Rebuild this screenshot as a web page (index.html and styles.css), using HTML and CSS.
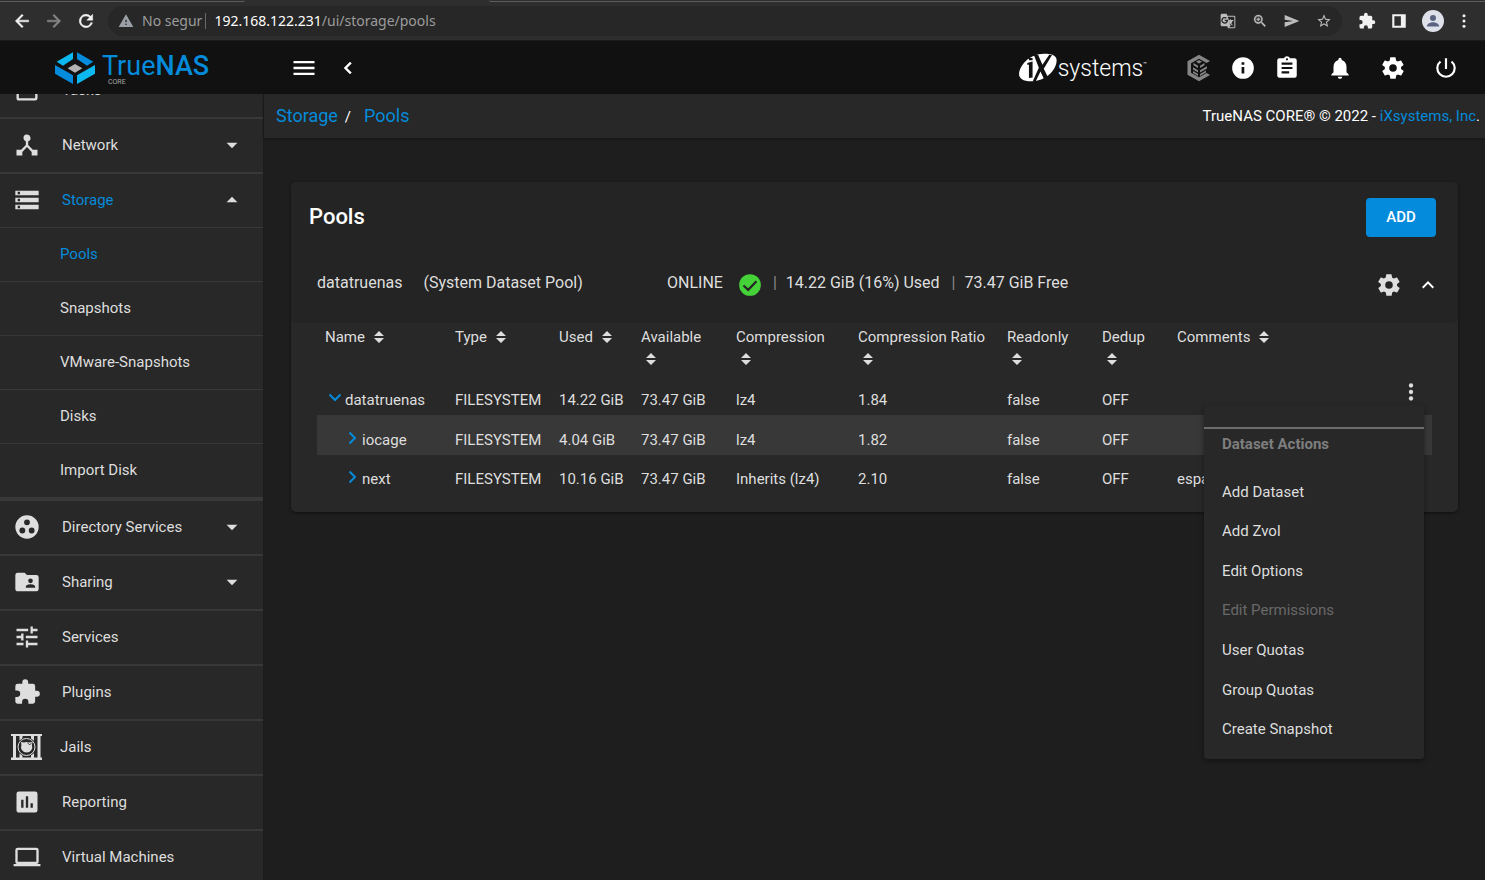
FILE: index.html
```html
<!DOCTYPE html>
<html lang="en">
<head>
<meta charset="utf-8">
<title>TrueNAS - Pools</title>
<link rel="stylesheet" href="styles.css">
</head>
<body>
<div class="browser">
  <div class="tabstrip"><span class="tabs-left"></span><span class="tabs-right"></span></div>
  <div class="toolbar">
    <button class="tool" aria-label="Back"><svg viewBox="0 0 24 24"><path d="M20 11H7.8l5.6-5.6L12 4l-8 8 8 8 1.400-1.400L7.800 13H20z" stroke="currentColor" stroke-width=".6"/></svg></button>
    <button class="tool dim" aria-label="Forward"><svg viewBox="0 0 24 24"><path d="M12 4l-1.400 1.400L16.200 11H4v2h12.200l-5.600 5.600L12 20l8-8z" stroke="currentColor" stroke-width=".6"/></svg></button>
    <button class="tool" aria-label="Reload"><svg viewBox="0 0 24 24"><path d="M17.650 6.350A8 8 0 1 0 19.730 14h-2.080A6 6 0 1 1 12 6c1.660 0 3.140.690 4.220 1.780L13 11h7V4z" stroke="currentColor" stroke-width=".6"/></svg></button>
    <div class="omnibox">
      <svg class="warn" viewBox="0 0 24 24"><path d="M1 21h22L12 2zm12-3h-2v-2h2zm0-4h-2v-4h2z"/></svg>
      <span class="insecure">No segur</span>
      <span class="url"><b>192.168.122.231</b>/ui/storage/pools</span>
      <button class="tool pale" aria-label="Translate"><svg viewBox="0 0 24 24"><path fill-rule="evenodd" d="M21 4H11l-1-3H3a2 2 0 0 0-2 2v15a2 2 0 0 0 2 2h8l1 3h9a2 2 0 0 0 2-2V6a2 2 0 0 0-2-2zM7 16a5 5 0 1 1 3.300-8.700L8.900 8.700A3 3 0 1 0 9.800 12H7v-2h5A5 5 0 0 1 7 16zm6.200-5.400h1.800V9.500h1.300v1.100H20v1.300h-1.200a9 9 0 0 1-1.900 3.700l2.300 2.300-1 1-2.300-2.400-1 1-.5-1.700.6-.6a9 9 0 0 1-1.300-2zM21.500 21a.5.5 0 0 1-.5.500h-7.500L16 19l-4.500-13.500H21a.5.5 0 0 1 .500.500z"/></svg></button>
      <button class="tool pale" aria-label="Zoom"><svg viewBox="0 0 24 24"><path d="M15.500 14h-.8l-.3-.3A6.500 6.500 0 1 0 13.700 14.400l.3.3v.8l5 5 1.500-1.500zm-6 0a4.500 4.500 0 1 1 0-9 4.500 4.500 0 0 1 0 9zm.700-7H8.800v1.800H7v1.400h1.800V12h1.400v-1.800H12V8.800h-1.800z" stroke="currentColor" stroke-width=".5"/></svg></button>
      <button class="tool pale" aria-label="Send"><svg viewBox="0 0 24 24"><path d="M1 21l22-9L1 3v7l13 2-13 2z"/></svg></button>
      <button class="tool pale" aria-label="Bookmark"><svg viewBox="0 0 24 24"><path d="M22 9.200l-7.200-.6L12 2 9.200 8.600 2 9.200l5.500 4.700L5.800 21 12 17.300 18.200 21l-1.600-7.100zM12 15.400l-3.800 2.300 1-4.300-3.300-2.900 4.400-.4 1.700-4 1.700 4 4.400.4-3.300 2.900 1 4.300z"/></svg></button>
    </div>
    <button class="tool ext" aria-label="Extensions"><svg viewBox="0 0 24 24"><path d="M20.500 11H19V7a2 2 0 0 0-2-2h-4V3.500a2.500 2.500 0 0 0-5 0V5H4a2 2 0 0 0-2 2v3.800h1.500a2.700 2.700 0 0 1 0 5.400H2V20c0 1.100.9 2 2 2h3.800v-1.500a2.700 2.700 0 0 1 5.400 0V22H17a2 2 0 0 0 2-2v-4h1.500a2.500 2.500 0 0 0 0-5z"/></svg></button>
    <button class="tool" aria-label="Side panel"><svg viewBox="0 0 24 24"><path fill-rule="evenodd" d="M3 3h18v18H3zm2.800 2.800v12.400h8.700V5.800z"/></svg></button>
    <button class="avatar" aria-label="Profile"><svg viewBox="0 0 24 24"><circle cx="12" cy="12" r="12" fill="#dee1ea"/><circle cx="12" cy="8.700" r="3.300" fill="#5a6380"/><path d="M5.300 18c0-3 3.700-4.700 6.700-4.700s6.700 1.700 6.700 4.700z" fill="#5a6380"/></svg></button>
    <button class="tool" aria-label="Browser menu"><svg viewBox="0 0 24 24"><circle cx="12" cy="5" r="2"/><circle cx="12" cy="12" r="2"/><circle cx="12" cy="19" r="2"/></svg></button>
  </div>
</div>

<header class="topbar">
  <a class="brand" href="#">
    <svg class="brand-mark" viewBox="165 152 120 96"><path fill="#0cb8f0" d="M170 181l49-28v20l-30 20zM285 191v26l-54 31v-26z"/><path fill="#048bdb" d="M280 181l-49-28v20l30 20zM165 191v26l54 31v-26z"/><path fill="#b4b4b4" d="M203 201l22-13 22 13-22 13z"/></svg>
    <span class="brand-text"><span class="brand-name">True<b>NAS</b></span><span class="brand-sub">CORE</span></span>
  </a>
  <button class="hbtn burger" aria-label="Toggle menu"><svg class="i28" viewBox="0 0 24 24"><path d="M3 6h18v2H3zm0 5h18v2H3zm0 5h18v2H3z"/></svg></button>
  <button class="hbtn" aria-label="Collapse menu"><svg class="i24" viewBox="0 0 24 24"><path d="M15.400 7.400L14 6l-6 6 6 6 1.400-1.400L10.800 12z" stroke="currentColor" stroke-width=".5"/></svg></button>
  <a class="ix" href="#" aria-label="iXsystems">
    <svg class="ix-mark" viewBox="58 156 118 88"><path fill="#fff" d="M58 220c0-26 32-62 76-62 24 0 38 6 38 20 0 30-34 64-78 64-24 0-36-8-36-22z"/><path fill="#111" d="M83 186l16-4v48l-11 2v-40h-5zM88 171h11v7H88zM103 162l13 0 13 30 20-30h9l-25 42 18 36h-15l-13-28-15 31h-9l19-42z"/></svg>
    <span class="ix-name">systems</span><span class="tm">™</span>
  </a>
  <div class="status-icons">
    <button class="hbtn grey" aria-label="TrueCommand"><svg class="i28" viewBox="0 0 28 28"><path d="M14 .8l11 6.300-3.400 2L14 4.800 6 9.300v9.400l8 4.600 7.600-4.200 3.400 1.800-11 6.300L2.500 20.700V7.300z"/><path d="M14 6l3 1.800-3 1.800-3-1.800zM8.500 9l4.500 2.700v2.200L8.500 11.300zM19.500 9L15 11.700v2.200l4.500-2.600zM8 13.200l5 3v2.200l-5-3zM22 12.200l-7 4v2.200l7-4zM8 17l5 3v2l-5-3zM21 16.600L15 20v2l6-3.400z"/></svg></button>
    <button class="hbtn" aria-label="Information"><svg class="i26" viewBox="0 0 24 24"><path fill-rule="evenodd" d="M12 2a10 10 0 1 0 0 20 10 10 0 0 0 0-20zm1.200 15h-2.500v-6h2.500zm0-8h-2.500V6.600h2.500z"/></svg></button>
    <button class="hbtn" aria-label="Task manager"><svg class="i26" viewBox="0 0 24 24"><path fill-rule="evenodd" d="M19 3h-4.200a3 3 0 0 0-5.600 0H5a2 2 0 0 0-2 2v14c0 1.100.9 2 2 2h14a2 2 0 0 0 2-2V5a2 2 0 0 0-2-2zm-7 0a1 1 0 1 1 0 2 1 1 0 0 1 0-2zm2 14H7v-2h7zm3-4H7v-2h10zm0-4H7V7h10z"/></svg></button>
    <button class="hbtn wide" aria-label="Notifications"><svg class="i26" viewBox="0 0 24 24"><path d="M12 22a2 2 0 0 0 2-2h-4c0 1.100.9 2 2 2zm6-6v-5c0-3.100-1.600-5.600-4.500-6.300V4a1.500 1.500 0 0 0-3 0v.7C7.600 5.400 6 7.900 6 11v5l-2 2v1h16v-1z"/></svg></button>
    <button class="hbtn wide" aria-label="Settings"><svg class="i26" viewBox="0 0 24 24"><path fill-rule="evenodd" d="M19.400 13a7.500 7.500 0 0 0 0-2l2.100-1.600a.5.5 0 0 0 .1-.7l-2-3.400a.5.5 0 0 0-.6-.2l-2.500 1a7.300 7.300 0 0 0-1.700-1l-.4-2.700a.5.5 0 0 0-.5-.4h-4a.5.5 0 0 0-.5.400L9 5.100a7.700 7.700 0 0 0-1.700 1l-2.500-1a.5.500 0 0 0-.6.200l-2 3.400a.5.5 0 0 0 .1.700L4.500 11a8 8 0 0 0 0 2l-2.100 1.600a.5.5 0 0 0-.1.700l2 3.400c.1.200.4.300.6.200l2.500-1a7.300 7.300 0 0 0 1.700 1l.4 2.700c0 .2.200.4.500.4h4c.200 0 .5-.2.500-.4l.4-2.700a7.700 7.700 0 0 0 1.700-1l2.500 1c.2.100.5 0 .6-.2l2-3.400a.5.5 0 0 0-.1-.7zM12 15.500a3.500 3.500 0 1 1 0-7 3.500 3.500 0 0 1 0 7z"/></svg></button>
    <button class="hbtn wide" aria-label="Power"><svg class="i26" viewBox="0 0 24 24"><path d="M13 3h-2v10h2zm4.800 2.200l-1.400 1.400A7 7 0 1 1 7.600 6.600L6.200 5.200a9 9 0 1 0 11.600 0z"/></svg></button>
  </div>
</header>

<div class="layout">
  <nav class="sidebar">
    <ul class="menu">
      <li><a class="item" href="#"><svg class="i28" viewBox="0 0 24 24"><path d="M19 3h-1V1h-2v2H8V1H6v2H5a2 2 0 0 0-2 2v14c0 1.100.9 2 2 2h14a2 2 0 0 0 2-2V5a2 2 0 0 0-2-2zm0 16H5V8h14z"/></svg><span>Tasks</span></a></li>
      <li><a class="item" href="#"><svg class="i28" viewBox="0 0 24 24"><path d="M17 16l-4-4V8.800A3 3 0 1 0 9 6c0 1.300.800 2.400 2 2.800V12l-4 4H3v5h5v-3l4-4.200 4 4.200v3h5v-5z"/></svg><span>Network</span><svg class="i26 caret" viewBox="0 0 24 24"><path d="M7 10l5 5 5-5z"/></svg></a></li>
      <li class="open"><a class="item active" href="#"><svg class="i28" viewBox="0 0 24 24"><path fill-rule="evenodd" d="M2 20h20v-4H2zm2-3h2v2H4zM2 4v4h20V4zm4 3H4V5h2zm-4 7h20v-4H2zm2-3h2v2H4z"/></svg><span>Storage</span><svg class="i26 caret" viewBox="0 0 24 24"><path d="M7 14l5-5 5 5z"/></svg></a>
        <ul class="submenu">
          <li><a class="active" href="#">Pools</a></li>
          <li><a href="#">Snapshots</a></li>
          <li><a href="#">VMware-Snapshots</a></li>
          <li><a href="#">Disks</a></li>
          <li><a href="#">Import Disk</a></li>
        </ul>
      </li>
      <li><a class="item" href="#"><svg class="i28" viewBox="0 0 24 24"><path fill-rule="evenodd" d="M12 2a10 10 0 1 0 0 20 10 10 0 0 0 0-20zM8 17.500a2.500 2.500 0 1 1 0-5 2.500 2.500 0 0 1 0 5zM9.500 8a2.500 2.500 0 1 1 5 0 2.500 2.500 0 0 1-5 0zm6.500 9.500a2.500 2.500 0 1 1 0-5 2.500 2.500 0 0 1 0 5z"/></svg><span>Directory Services</span><svg class="i26 caret" viewBox="0 0 24 24"><path d="M7 10l5 5 5-5z"/></svg></a></li>
      <li><a class="item" href="#"><svg class="i28" viewBox="0 0 24 24"><path fill-rule="evenodd" d="M20 6h-8l-2-2H4a2 2 0 0 0-2 2v12c0 1.100.9 2 2 2h16a2 2 0 0 0 2-2V8a2 2 0 0 0-2-2zm-5 3a2 2 0 1 1 0 4 2 2 0 0 1 0-4zm4 8h-8v-1c0-1.300 2.700-2 4-2s4 .7 4 2z"/></svg><span>Sharing</span><svg class="i26 caret" viewBox="0 0 24 24"><path d="M7 10l5 5 5-5z"/></svg></a></li>
      <li><a class="item" href="#"><svg class="i28" viewBox="0 0 24 24"><path d="M3 17v2h6v-2zM3 5v2h10V5zm10 16v-2h8v-2h-8v-2h-2v6zM7 9v2H3v2h4v2h2V9zm14 4v-2H11v2zm-6-4h2V7h4V5h-4V3h-2z"/></svg><span>Services</span></a></li>
      <li><a class="item" href="#"><svg class="i28" viewBox="0 0 24 24"><path d="M20.500 11H19V7a2 2 0 0 0-2-2h-4V3.500a2.500 2.500 0 0 0-5 0V5H4a2 2 0 0 0-2 2v3.800h1.500a2.700 2.700 0 0 1 0 5.400H2V20c0 1.100.9 2 2 2h3.800v-1.500a2.700 2.700 0 0 1 5.400 0V22H17a2 2 0 0 0 2-2v-4h1.500a2.500 2.500 0 0 0 0-5z"/></svg><span>Plugins</span></a></li>
      <li><a class="item jails" href="#"><svg class="jail-icon" viewBox="0 0 31 26"><path d="M0 0h31v2H0zM0 23.500h31V26H0zM2 2h3v22H2zM8.500 2h3v22h-3zM20 2h3v22h-3zM26.500 2h3v22h-3z"/><circle cx="15.500" cy="13" r="9.700" fill="#282828"/><circle cx="15.500" cy="13" r="8.500" fill="none" stroke="#dedede" stroke-width="1"/><path d="M10 8l3 .6a6 6 0 0 1 5 0L21.500 8l-.6 3a5.600 5.600 0 1 1-10.500 0z"/><path d="M16.500 9l2.500 1.800L20.500 9" fill="none" stroke="#282828" stroke-width=".8"/></svg><span>Jails</span></a></li>
      <li><a class="item" href="#"><svg class="i28" viewBox="0 0 24 24"><path fill-rule="evenodd" d="M19 3H5a2 2 0 0 0-2 2v14c0 1.100.9 2 2 2h14a2 2 0 0 0 2-2V5a2 2 0 0 0-2-2zM9 17H7v-7h2zm4 0h-2V7h2zm4 0h-2v-4h2z"/></svg><span>Reporting</span></a></li>
      <li><a class="item" href="#"><svg class="i28" viewBox="0 0 24 24"><path fill-rule="evenodd" d="M20 18a2 2 0 0 0 2-2V6a2 2 0 0 0-2-2H4a2 2 0 0 0-2 2v10c0 1.100.9 2 2 2H.5v2h23v-2zM4 6h16v10H4z"/></svg><span>Virtual Machines</span></a></li>
    </ul>
  </nav>

  <div class="content">
    <div class="crumbbar">
      <div class="crumbs"><a href="#">Storage</a><span class="slash">/</span><a href="#">Pools</a></div>
      <div class="copyright">TrueNAS CORE® © 2022 - <a href="#">iXsystems, Inc</a>.</div>
    </div>
    <main class="page">
      <section class="card">
        <div class="card-head">
          <h1>Pools</h1>
          <button class="add">ADD</button>
        </div>
        <div class="pool-head">
          <div class="pool-name"><span>datatruenas</span><span>(System Dataset Pool)</span></div>
          <div class="pool-status">
            <span>ONLINE</span>
            <svg class="i26 ok" viewBox="0 0 24 24"><circle cx="12" cy="12" r="10" fill="#45d238"/><path d="M6 12.500l4.300 4 7.700-8" fill="none" stroke="#242424" stroke-width="2"/></svg>
            <span class="bar">|</span><span>14.22 GiB (16%) Used</span><span class="bar">|</span><span>73.47 GiB Free</span>
          </div>
          <button class="plain" aria-label="Pool settings"><svg class="i26" viewBox="0 0 24 24"><path fill-rule="evenodd" d="M19.400 13a7.500 7.500 0 0 0 0-2l2.100-1.600a.5.5 0 0 0 .1-.7l-2-3.400a.5.5 0 0 0-.6-.2l-2.500 1a7.300 7.300 0 0 0-1.700-1l-.4-2.700a.5.5 0 0 0-.5-.4h-4a.5.5 0 0 0-.5.400L9 5.100a7.700 7.700 0 0 0-1.700 1l-2.500-1a.5.500 0 0 0-.6.200l-2 3.400a.5.5 0 0 0 .1.700L4.500 11a8 8 0 0 0 0 2l-2.100 1.600a.5.5 0 0 0-.1.700l2 3.400c.1.200.4.300.6.200l2.500-1a7.300 7.300 0 0 0 1.700 1l.4 2.700c0 .2.200.4.500.4h4c.200 0 .5-.2.500-.4l.4-2.700a7.700 7.700 0 0 0 1.700-1l2.500 1c.2.100.5 0 .6-.2l2-3.400a.5.5 0 0 0-.1-.7zM12 15.500a3.500 3.500 0 1 1 0-7 3.500 3.500 0 0 1 0 7z"/></svg></button>
          <button class="plain collapse" aria-label="Collapse pool"><svg class="i24" viewBox="0 0 24 24"><path d="M12 8l-6 6 1.400 1.400 4.600-4.600 4.600 4.600L18 14z"/></svg></button>
        </div>
        <div class="table-wrap">
          <table class="datasets">
            <colgroup><col class="c-name"><col class="c-type"><col class="c-used"><col class="c-avail"><col class="c-comp"><col class="c-ratio"><col class="c-ro"><col class="c-dedup"><col><col class="c-act"></colgroup>
            <thead><tr>
              <th><button>Name <svg class="sort" viewBox="0 0 10 12"><path d="M5 0l5 5H0zM0 7h10l-5 5z"/></svg></button></th>
              <th><button>Type <svg class="sort" viewBox="0 0 10 12"><path d="M5 0l5 5H0zM0 7h10l-5 5z"/></svg></button></th>
              <th><button>Used <svg class="sort" viewBox="0 0 10 12"><path d="M5 0l5 5H0zM0 7h10l-5 5z"/></svg></button></th>
              <th><button>Available <svg class="sort" viewBox="0 0 10 12"><path d="M5 0l5 5H0zM0 7h10l-5 5z"/></svg></button></th>
              <th><button>Compression <svg class="sort" viewBox="0 0 10 12"><path d="M5 0l5 5H0zM0 7h10l-5 5z"/></svg></button></th>
              <th><button>Compression Ratio <svg class="sort" viewBox="0 0 10 12"><path d="M5 0l5 5H0zM0 7h10l-5 5z"/></svg></button></th>
              <th><button>Readonly <svg class="sort" viewBox="0 0 10 12"><path d="M5 0l5 5H0zM0 7h10l-5 5z"/></svg></button></th>
              <th><button>Dedup <svg class="sort" viewBox="0 0 10 12"><path d="M5 0l5 5H0zM0 7h10l-5 5z"/></svg></button></th>
              <th><button>Comments <svg class="sort" viewBox="0 0 10 12"><path d="M5 0l5 5H0zM0 7h10l-5 5z"/></svg></button></th>
              <th></th>
            </tr></thead>
            <tbody>
              <tr><td><button class="tree" aria-label="Collapse datatruenas"><svg viewBox="0 0 20 14"><path d="M4.500 3.500l5.500 5.500 5.500-5.500"/></svg></button>datatruenas</td><td>FILESYSTEM</td><td>14.22 GiB</td><td>73.47 GiB</td><td>lz4</td><td>1.84</td><td>false</td><td>OFF</td><td></td>
                <td class="actions"><button class="kebab" aria-label="Dataset menu"><svg class="i26" viewBox="0 0 24 24"><circle cx="12" cy="6" r="2"/><circle cx="12" cy="12" r="2"/><circle cx="12" cy="18" r="2"/></svg></button>
                  <div class="popup">
                    <div class="popup-title">Dataset Actions</div>
                    <div class="popup-items">
                      <button>Add Dataset</button>
                      <button>Add Zvol</button>
                      <button>Edit Options</button>
                      <button disabled>Edit Permissions</button>
                      <button>User Quotas</button>
                      <button>Group Quotas</button>
                      <button>Create Snapshot</button>
                    </div>
                  </div>
                </td></tr>
              <tr class="hover"><td class="child"><button class="tree" aria-label="Expand iocage"><svg viewBox="0 0 20 14"><path d="M7.500 1.500l5.500 5.500-5.500 5.500"/></svg></button>iocage</td><td>FILESYSTEM</td><td>4.04 GiB</td><td>73.47 GiB</td><td>lz4</td><td>1.82</td><td>false</td><td>OFF</td><td></td><td></td></tr>
              <tr><td class="child"><button class="tree" aria-label="Expand next"><svg viewBox="0 0 20 14"><path d="M7.500 1.500l5.500 5.500-5.500 5.500"/></svg></button>next</td><td>FILESYSTEM</td><td>10.16 GiB</td><td>73.47 GiB</td><td>Inherits (lz4)</td><td>2.10</td><td>false</td><td>OFF</td><td>espai</td><td></td></tr>
            </tbody>
          </table>
        </div>
      </section>
    </main>
  </div>
</div>
</body>
</html>
```
FILE: styles.css
```css
* { box-sizing: border-box; }

:root {
  --blue: #048bdb;
  --text: #dedede;
  --panel: #282828;
  --line: #383838;
}

body {
  margin: 0;
  height: 100vh;
  display: flex;
  flex-direction: column;
  overflow: hidden;
  background: #1e1e1e;
  color: var(--text);
  font: 15px/22px Roboto, sans-serif;
}

a { color: var(--blue); text-decoration: none; }
ul { list-style: none; margin: 0; padding: 0; }
button { font: inherit; color: inherit; background: none; border: 0; padding: 0; }
svg { display: block; fill: currentColor; flex: none; }
.i24 { width: 24px; height: 24px; }
.i26 { width: 26px; height: 26px; }
.i28 { width: 28px; height: 28px; }

/* Browser chrome */
.browser { background: #2e2e2e; border-bottom: 1px solid #1c1c1c; }
.tabstrip { display: flex; justify-content: space-between; height: 2px; }
.tabs-left { width: 245px; border-bottom: 1px solid #5c5c5c; border-bottom-right-radius: 3px; }
.tabs-right { width: calc(100% - 489px); border-bottom: 1px solid #5c5c5c; border-bottom-left-radius: 3px; }
.toolbar { display: flex; align-items: center; gap: 14px; height: 38px; padding: 0 12px; }
.tool { color: #f2f2f2; }
.tool svg { width: 18px; height: 18px; }
.toolbar > .tool:nth-child(-n+3) { margin-right: -2px; }
.toolbar > .tool:nth-child(-n+3) svg { width: 20px; height: 20px; }
.tool.dim { color: #868686; }
.tool.pale { color: #bdbdbd; margin-left: 16px; }
.tool.pale svg { width: 16px; height: 16px; }
.avatar svg { width: 22px; height: 22px; }
.omnibox {
  flex: 1;
  display: flex;
  align-items: center;
  height: 30px;
  padding: 0 10px;
  border-radius: 15px;
  background: #272727;
  font: 14px/20px "Noto Sans", sans-serif;
  color: #9c9c9c;
}
.warn { width: 16px; height: 16px; margin-right: 8px; color: #9aa0a6; }
.insecure { padding-right: 3px; border-right: 1px solid #6a6a6a; line-height: 16px; }
.url { flex: 1; padding-left: 8px; }
.url b { font-weight: 400; color: #fff; }
.toolbar > .ext { margin-left: 2px; }
.avatar ~ .tool { margin-left: -3px; }

/* Application header */
.topbar { display: flex; align-items: center; height: 53px; flex: none; background: #111; color: #fff; }
.brand { display: flex; align-items: center; width: 264px; padding-left: 55px; gap: 7px; }
.brand-mark { width: 40px; height: 32px; }
.brand-text { display: flex; flex-direction: column; padding-top: 3px; }
.brand-name { font-size: 27px; line-height: 26px; font-weight: 400; }
.brand-name b { font-weight: 500; }
.brand-sub { font-size: 7px; line-height: 7px; padding-left: 6px; color: #a8a8a8; }
.hbtn { display: flex; align-items: center; justify-content: center; width: 44px; height: 44px; }
.hbtn.wide { width: 53px; }
.hbtn.grey { color: #858585; }
.burger { margin-left: 18px; }
.ix { display: flex; align-items: center; margin-left: auto; margin-right: 30px; color: #fff; }
.ix-mark { width: 39px; height: 29px; }
.ix-name { font-size: 23px; line-height: 28px; padding-top: 2px; font-weight: 300; }
.tm { font-size: 6px; line-height: 6px; align-self: flex-start; padding-top: 8px; }
.status-icons { display: flex; padding-right: 13px; }
.status-icons .hbtn:nth-child(3) { margin-right: 4px; }

/* Sidebar */
.layout { flex: 1; min-height: 0; display: flex; }
.sidebar { width: 264px; flex: none; overflow: hidden; background: var(--panel); border-right: 1px solid #1c1c1c; }
.menu { margin-top: -30px; }
.menu > li { border-bottom: 2px solid var(--line); }
.menu > li.open { border-bottom-width: 4px; }
.item { display: flex; align-items: center; gap: 21px; height: 53px; padding: 0 18px 2px 13px; color: var(--text); }
.item.active, .submenu .active { color: var(--blue); }
.item svg { color: var(--text); }
.item .caret { margin-left: auto; }
.item.jails { padding-left: 11px; gap: 18px; }
.jail-icon { width: 31px; height: 26px; }
.submenu a { display: block; border-top: 1px solid var(--line); padding: 15px 0 16px 60px; color: var(--text); }

/* Page */
.content { flex: 1; min-width: 0; display: flex; flex-direction: column; }
.crumbbar {
  display: flex;
  justify-content: space-between;
  align-items: center;
  height: 44px;
  flex: none;
  padding: 0 5px 0 12px;
  background: var(--panel);
  box-shadow: 0 1px 3px rgba(0, 0, 0, .3);
  color: #fff;
}
.crumbs { font-size: 18px; }
.slash { padding: 0 13px 0 7px; font-size: 15px; }
.page { padding: 44px 27px; }
.card { border-radius: 5px; background: var(--panel); box-shadow: 0 1px 3px rgba(0, 0, 0, .5); }
.card-head { display: flex; justify-content: space-between; align-items: center; padding: 16px 22px 15px 18px; background: #242424; border-radius: 5px 5px 0 0; }
h1 { margin: 0; padding-bottom: 2px; font-size: 22px; line-height: 30px; font-weight: 500; color: #fff; }
.add { width: 70px; height: 39px; padding-bottom: 2px; border-radius: 4px; background: var(--blue); color: #fff; font-weight: 500; }
.pool-head { display: flex; align-items: center; height: 71px; padding: 0 18px 6px 26px; background: #242424; font-size: 16px; border-radius: 0 0 5px 5px; }
.pool-name { flex: 0 0 350px; display: flex; gap: 21px; padding-bottom: 4px; }
.pool-status { flex: 1; display: flex; align-items: center; }
.pool-status span { padding-bottom: 4px; }
.pool-status .ok { margin: 0 10px 0 14px; }
.pool-status .bar { padding: 0 9px 4px 12px; color: #8a8a8a; }
.pool-status .ok + .bar { padding-left: 0; }
.collapse { margin-left: 14px; color: #fff; }

/* Dataset table */
.table-wrap { padding: 0 26px 18px; }
.datasets { width: 100%; table-layout: fixed; border-collapse: collapse; }
.c-name { width: 130px; }
.c-type { width: 104px; }
.c-used { width: 82px; }
.c-avail { width: 95px; }
.c-comp { width: 122px; }
.c-ratio { width: 149px; }
.c-ro { width: 95px; }
.c-dedup { width: 75px; }
.c-act { width: 42px; }
th { height: 53px; padding: 3px 12px 0 8px; vertical-align: top; font-weight: 400; text-align: left; }
th button { text-align: left; }
.sort { display: inline-block; width: 10px; height: 12px; margin-left: 5px; vertical-align: -1px; }
td { height: 39px; padding: 8px 8px 0; white-space: nowrap; }
.hover td { height: 40px; padding-top: 9px; }
tbody tr:first-child td { padding-top: 9px; }
td.child { padding-left: 25px; }
.tree { display: inline-block; color: var(--blue); vertical-align: 0; }
.tree svg { width: 20px; height: 14px; fill: none; stroke: currentColor; stroke-width: 2; }
.hover { background: var(--line); }
tbody tr:first-child .actions { position: relative; padding: 0 8px 8px; }
.kebab { display: block; }

.popup {
  position: absolute;
  z-index: 2;
  top: 29px;
  right: 8px;
  width: 220px;
  padding: 22px 0 10px;
  border-radius: 4px;
  background: var(--panel);
  box-shadow: 0 2px 5px rgba(0, 0, 0, .4);
}
.popup-title { border-top: 2px solid #6c6c6c; padding: 4px 18px 17px; font-weight: 700; color: #7e7e7e; }
.popup-items { display: grid; grid-auto-rows: 1fr; min-height: 277px; }
.popup-items button { padding: 0 18px; text-align: left; }
.popup-items button:disabled { color: #686868; }
```
